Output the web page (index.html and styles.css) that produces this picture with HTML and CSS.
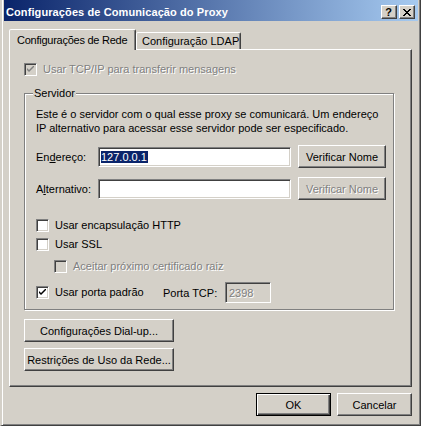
FILE: index.html
```html
<!DOCTYPE html>
<html>
<head>
<meta charset="utf-8">
<link rel="stylesheet" href="styles.css">
</head>
<body>
<div class="window">
  <div class="titlebar">
    <span class="title">Configurações de Comunicação do Proxy</span>
    <div class="tbtns">
      <div class="tbtn q">?</div>
      <div class="tbtn x"><svg width="8" height="7" viewBox="0 0 8 7"><path d="M0 0h2v1h1v1h2v-1h1v-1h2v1h-1v1h-1v1h-1v1h1v1h1v1h1v1h-2v-1h-1v-1h-2v1h-1v1h-2v-1h1v-1h1v-1h1v-1h-1v-1h-1v-1h-1z" fill="#000"/></svg></div>
    </div>
  </div>
  <div class="client">
    <div class="tabs">
      <div class="tab active">Configurações de Rede</div>
      <div class="tab">Configuração LDAP</div>
    </div>
    <div class="panel">
      <div class="cbrow tcp disabled">
        <span class="cb checked dis"><svg width="7" height="7" viewBox="0 0 7 7"><path d="M0 2l2 2 5-5v2l-5 5-2-2z" fill="#808080"/></svg></span>
        <span class="lbl">Usar TCP/IP para transferir mensagens</span>
      </div>
      <div class="group">
        <span class="legend">Servidor</span>
        <p class="desc">Este é o servidor com o qual esse proxy se comunicará. Um endereço<br>IP alternativo para acessar esse servidor pode ser especificado.</p>
        <div class="frow r1">
          <span class="flabel">En<u>d</u>ereço:</span>
          <div class="input"><span class="sel">127.0.0.1</span></div>
          <div class="btn vbtn">Verificar Nome</div>
        </div>
        <div class="frow r2">
          <span class="flabel">A<u>l</u>ternativo:</span>
          <div class="input"></div>
          <div class="btn vbtn disabled"><span class="dtext">Verificar Nome</span></div>
        </div>
        <div class="cbrow c1">
          <span class="cb"></span>
          <span class="lbl">Usar encapsulação HTTP</span>
        </div>
        <div class="cbrow c2">
          <span class="cb"></span>
          <span class="lbl">Usar SSL</span>
        </div>
        <div class="cbrow c3 indent disabled">
          <span class="cb dis"></span>
          <span class="lbl">Aceitar próximo certificado raiz</span>
        </div>
        <div class="cbrow c4">
          <span class="cb checked"><svg width="7" height="7" viewBox="0 0 7 7"><path d="M0 2l2 2 5-5v2l-5 5-2-2z" fill="#000"/></svg></span>
          <span class="lbl">Usar porta padrão</span>
          <span class="portlbl">Porta TCP:</span>
          <div class="input port dis"><span class="dtext">2398</span></div>
        </div>
      </div>
      <div class="btn wide b1">Configurações Dial-up...</div>
      <div class="btn wide b2">Restrições de Uso da Rede...</div>
    </div>
    <div class="footer">
      <div class="btn def">OK</div>
      <div class="btn">Cancelar</div>
    </div>
  </div>
</div>
</body>
</html>
```
FILE: styles.css
```css
* { box-sizing: border-box; }
html, body { margin: 0; padding: 0; background: #d4d0c8; }
body { font: 11px "Liberation Sans", Arial, sans-serif; color: #000; }

.window {
  width: 421px; height: 426px;
  background: #d4d0c8;
  border-left: 2px solid #d4d0c8;
  border-right: 1px solid #404040;
  border-bottom: 1px solid #404040;
  box-shadow: inset 1px 0 #fff, inset -1px -1px #808080;
  padding: 0 3px 2px 3px;
  display: flex; flex-direction: column;
}

.titlebar {
  height: 21px;
  margin: 0 -1px 0 -1px;
  background: linear-gradient(to right, #0a246a, #a6caf0);
  display: flex; align-items: center; justify-content: space-between;
  padding: 0 3px 0 2px;
}
.title { color: #fff; font-weight: bold; font-size: 11px; letter-spacing: 0.1px; position: relative; top: 1px; white-space: nowrap; }
.tbtns { display: flex; gap: 2px; margin-top: 3px; }
.tbtn {
  width: 16px; height: 14px;
  background: #d4d0c8;
  border: 1px solid; border-color: #fff #404040 #404040 #fff;
  box-shadow: inset -1px -1px #808080;
  display: flex; align-items: center; justify-content: center;
}
.tbtn.q { font-weight: bold; font-size: 11px; line-height: 12px; padding-right: 1px; }

.client { padding: 8px 4px 0 4px; flex: 1; display: flex; flex-direction: column; }

.tabs { display: flex; align-items: flex-end; height: 20px; position: relative; z-index: 1; }
.tab {
  height: 17px;
  white-space: nowrap;
  border: 1px solid; border-bottom: none;
  border-color: #fff #404040 transparent #fff;
  box-shadow: inset -1px 0 #808080;
  border-top-left-radius: 2px; border-top-right-radius: 2px;
  padding: 1px 0 0 5px;
  line-height: 14px;
  background: #d4d0c8;
}
.tab.active { height: 21px; margin-bottom: -1px; padding: 3px 0 0 7px; width: 127px; letter-spacing: -0.25px; }
.tab:not(.active) { width: 105px; padding-left: 5px; }

.panel {
  height: 338px; width: 403px;
  border: 1px solid; border-color: #fff #404040 #404040 #fff;
  box-shadow: inset -1px -1px #808080;
  padding: 0 0 0 14px;
}

.cbrow { display: flex; align-items: center; height: 13px; white-space: nowrap; }
.cb {
  width: 13px; height: 13px; flex: none;
  background: #fff;
  border: 1px solid; border-color: #808080 #fff #fff #808080;
  box-shadow: inset 1px 1px #404040, inset -1px -1px #d4d0c8;
  display: flex; align-items: center; justify-content: center;
}
.cb.dis { background: #d4d0c8; }
.lbl { margin-left: 6px; line-height: 13px; }
.disabled .lbl, .dtext { color: #808080; text-shadow: 1px 1px 0 #fff; }

.tcp { margin-top: 13px; }

.group {
  position: relative;
  margin-top: 17px;
  width: 370px; height: 217px;
  border: 1px solid #808080;
  box-shadow: inset 1px 1px #fff, 1px 1px #fff;
  padding: 13px 0 0 11px;
}
.legend { position: absolute; left: 8px; top: -7px; padding: 0 1px; background: #d4d0c8; line-height: 13px; }
.desc { margin: 0; line-height: 14px; white-space: nowrap; }

.frow { display: flex; align-items: center; height: 23px; }
.r1 { margin-top: 10px; }
.r2 { margin-top: 9px; }
.flabel { width: 62px; flex: none; }
.input {
  width: 193px; height: 20px;
  background: #fff;
  border: 1px solid; border-color: #808080 #fff #fff #808080;
  box-shadow: inset 1px 1px #404040, inset -1px -1px #d4d0c8;
  padding: 3px 0 0 2px; line-height: 13px;
}
.sel { background: #0a246a; color: #fff; padding: 0 1px 0 0; display: inline-block; line-height: 12px; }
.btn {
  height: 23px;
  white-space: nowrap;
  background: #d4d0c8;
  border: 1px solid; border-color: #fff #404040 #404040 #fff;
  box-shadow: inset -1px -1px #808080;
  display: flex; align-items: center; justify-content: center;
}
.vbtn { width: 88px; margin-left: 7px; }

.c1 { margin-top: 19px; }
.c2 { margin-top: 6px; }
.c3 { margin-top: 9px; }
.c4 { margin-top: 9px; height: 21px; }
.c4 .lbl { width: 108px; flex: none; }
.indent { padding-left: 18px; }
.portlbl { width: 62px; flex: none; }
.input.port { width: 46px; height: 21px; background: #d4d0c8; padding-top: 4px; padding-left: 3px; }

.wide { width: 150px; }
.b1 { margin-top: 9px; }
.b2 { margin-top: 6px; }

.footer { display: flex; justify-content: flex-end; gap: 6px; margin-top: 6px; width: 403px; }
.footer .btn { width: 75px; }
.btn.def { border: 1px solid #000; box-shadow: inset 1px 1px #fff, inset -1px -1px #404040, inset -2px -2px #808080; }
```
